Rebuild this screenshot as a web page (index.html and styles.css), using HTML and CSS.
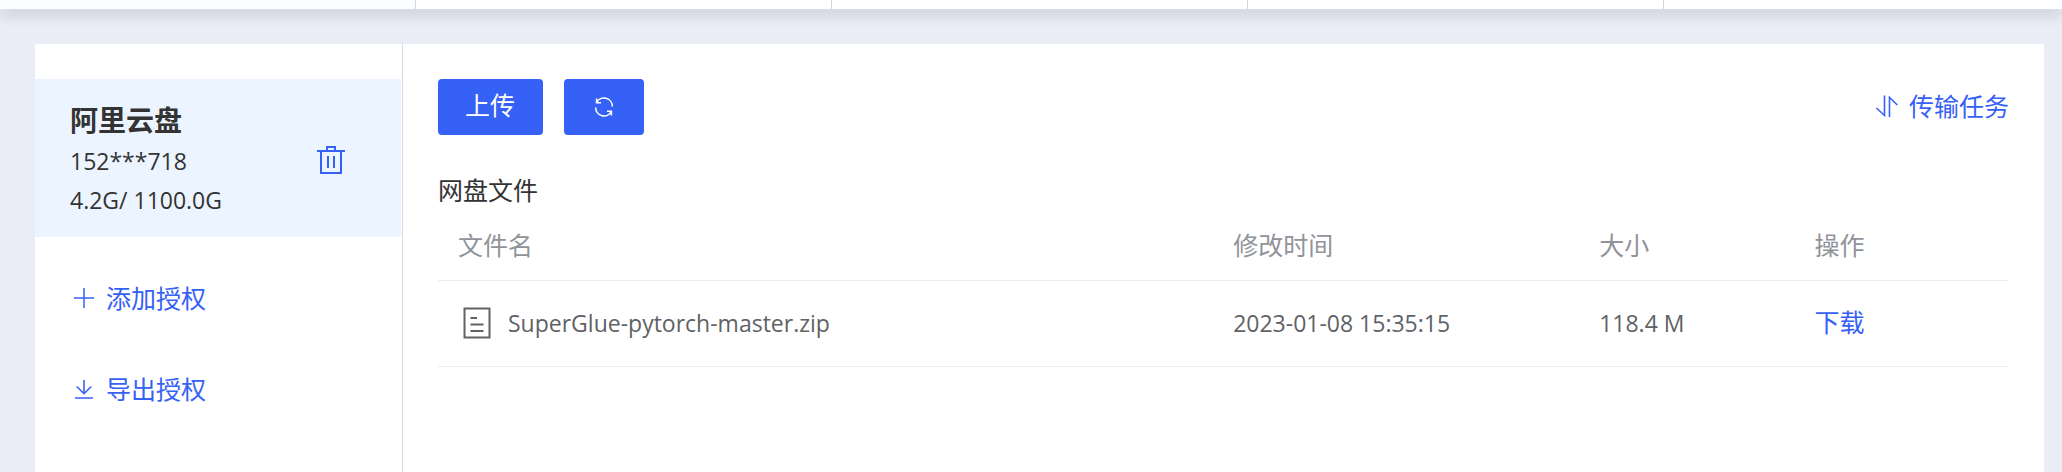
FILE: index.html
```html
<!DOCTYPE html>
<html lang="zh-CN">
<head>
<meta charset="utf-8">
<title>网盘文件</title>
<link rel="stylesheet" href="styles.css">
</head>
<body>
<header class="topbar"><span class="topbar-cell topbar-active"></span><span class="topbar-cell"></span><span class="topbar-cell"></span><span class="topbar-cell"></span></header>
<div class="panel">
  <aside class="sidebar">
    <section class="account">
      <div class="account-info">
        <h2 class="account-name">阿里云盘</h2>
        <p class="account-line">152***718</p>
        <p class="account-line">4.2G/ 1100.0G</p>
      </div>
      <button class="icon-button" type="button" aria-label="删除">
        <svg width="28" height="28" viewBox="0 0 28 28" fill="none" stroke="currentColor" stroke-width="2"><path d="M0 5H28M4 5V27H24V5M10 5V1H18V5M11 10V22M17 10V22"/></svg>
      </button>
    </section>
    <nav class="links">
      <a class="link" href="#add"><svg width="24" height="24" viewBox="0 0 24 24" fill="none" stroke="currentColor" stroke-width="1.5"><path d="M2 12H22M12 2V22"/></svg>添加授权</a>
      <a class="link" href="#export"><svg width="24" height="24" viewBox="0 0 24 24" fill="none" stroke="currentColor" stroke-width="1.6"><path d="M12 3V16.500M4.800 9.500L12 16.700L19.200 9.500M3 21H21"/></svg>导出授权</a>
    </nav>
  </aside>
  <main class="main">
    <div class="toolbar">
      <button class="button" type="button">上传</button>
      <button class="button button-refresh" type="button" aria-label="刷新">
        <svg width="24" height="24" viewBox="0 0 24 24" fill="none" stroke="currentColor" stroke-width="1.600"><path d="M4.600 7.600A8.300 8.300 0 0 1 20.300 11.600M3.700 12.400A8.300 8.300 0 0 0 19.400 16.400M4.600 3.500V7.800H9M19.400 20.500V16.200H15"/></svg>
      </button>
      <a class="link tasks" href="#tasks"><svg width="24" height="24" viewBox="0 0 24 24" fill="none" stroke="currentColor" stroke-width="1.600"><path d="M1.500 14L9.500 21.500V1.500M14.500 23V3.300L22.300 11"/></svg>传输任务</a>
    </div>
    <h1 class="title">网盘文件</h1>
    <table class="files">
      <thead>
        <tr><th class="col-name">文件名</th><th class="col-time">修改时间</th><th class="col-size">大小</th><th>操作</th></tr>
      </thead>
      <tbody>
        <tr>
          <td><span class="file"><svg width="28" height="32" viewBox="0 0 28 32" fill="none" stroke="currentColor" stroke-width="2"><path d="M1.500 1.500H26.500V30.500H1.500ZM7.500 11H14M7.500 17.500H20.500M7.500 24H20.500"/></svg>SuperGlue-pytorch-master.zip</span></td>
          <td>2023-01-08 15:35:15</td>
          <td>118.4 M</td>
          <td><a class="download" href="#download">下载</a></td>
        </tr>
      </tbody>
    </table>
  </main>
</div>
</body>
</html>
```
FILE: styles.css
```css
* { box-sizing: border-box; }

body {
  margin: 0;
  min-height: 100vh;
  display: flex;
  flex-direction: column;
  background: #eaedf6;
  color: #333;
  font: 23px/39px "Open Sans", "Noto Sans CJK SC", sans-serif;
}

h1, h2, p { margin: 0; }

.topbar {
  display: flex;
  height: 9px;
  background: #fff;
  box-shadow: 0 6px 14px rgba(0, 0, 0, 0.16);
}

.topbar-cell {
  width: 20.18%;
  border-right: 1px solid #d4d7e0;
}

.topbar-active { background: #fcfdff; }

.panel {
  flex: 1;
  display: flex;
  margin: 35px 18px 0 35px;
  background: #fff;
}

.sidebar {
  flex: none;
  width: 368px;
  padding: 35px 1px 35px 0;
  border-right: 1px solid #d6d8e2;
}

.account {
  display: flex;
  align-items: center;
  justify-content: space-between;
  padding: 20px 56px 17px 35px;
  background: #ecf5ff;
}

.account-name {
  font-size: 28px;
  line-height: 43px;
}

.icon-button {
  display: flex;
  padding: 0;
  border: 0;
  background: none;
  color: #3661f6;
}

.links {
  display: flex;
  flex-direction: column;
  align-items: flex-start;
  gap: 51px;
  padding: 41px 37px;
}

.link {
  display: flex;
  align-items: center;
  gap: 10px;
  color: #3661f6;
  font-size: 25px;
  line-height: 40px;
  text-decoration: none;
}

.main {
  flex: 1;
  min-width: 0;
  padding: 35px;
}

.toolbar {
  display: flex;
  align-items: center;
  gap: 21px;
}

.button {
  display: flex;
  align-items: center;
  justify-content: center;
  min-width: 80px;
  height: 56px;
  padding: 0 28px 3px 27px;
  border: 0;
  border-radius: 4px;
  background: #3661f6;
  color: #fff;
  font: inherit;
  font-size: 25px;
}

.button-refresh { padding: 0 28px; }

.tasks {
  margin-left: auto;
  padding-bottom: 3px;
}

.title {
  margin-top: 35px;
  font-size: 25px;
  font-weight: 400;
  line-height: 40px;
}

.files {
  width: 100%;
  table-layout: fixed;
  border-collapse: collapse;
}

.files th,
.files td {
  padding: 0 20px;
  border-bottom: 1px solid #ebedf5;
  text-align: left;
  font-weight: 400;
}

.files th {
  height: 70px;
  padding-top: 2px;
  color: #909399;
  font-size: 25px;
}

.files td {
  height: 86px;
  color: #606266;
}

.col-name { width: 49.34%; }
.col-time { width: 23.3%; }
.col-size { width: 13.7%; }

.file {
  display: flex;
  align-items: center;
  gap: 17px;
  padding-left: 5px;
}

.download {
  color: #3661f6;
  font-size: 25px;
  text-decoration: none;
}
```
